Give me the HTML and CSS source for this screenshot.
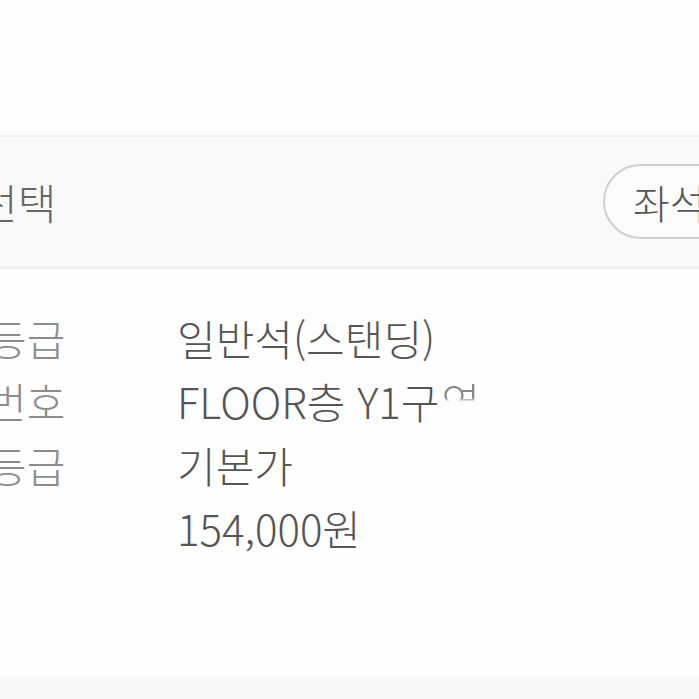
FILE: index.html
```html
<!DOCTYPE html>
<html lang="ko">
<head>
<meta charset="utf-8">
<title>좌석 선택</title>
<link rel="stylesheet" href="styles.css">
</head>
<body>
<div class="page">
  <section class="seat-head">
    <h2 class="seat-title">좌석 선택</h2>
    <button class="seat-btn" type="button">좌석 배치도</button>
  </section>
  <dl class="seat-info">
    <div class="info-row">
      <dt class="info-label">좌석 등급</dt>
      <dd class="info-value">일반석(스탠딩)</dd>
    </div>
    <div class="info-row">
      <dt class="info-label">좌석 번호</dt>
      <dd class="info-value">FLOOR층 Y1구<span class="faded">역</span></dd>
    </div>
    <div class="info-row">
      <dt class="info-label">가격 등급</dt>
      <dd class="info-value">기본가</dd>
    </div>
    <div class="info-row">
      <dt class="info-label">가격</dt>
      <dd class="info-value">154,000원</dd>
    </div>
  </dl>
  <div class="foot-band"></div>
</div>
</body>
</html>
```

FILE: styles.css
```css
* { box-sizing: border-box; }
html, body {
  margin: 0;
  padding: 0;
  background: #fefefe;
  overflow: hidden;
  width: 699px;
  height: 699px;
}
.page {
  margin-left: -110px;
  width: 1000px;
  padding-top: 135px;
  font-family: "Noto Sans CJK KR", "Noto Sans", sans-serif;
  font-weight: 300;
}
.seat-head {
  display: grid;
  grid-template-columns: 713px auto;
  align-items: center;
  height: 134px;
  background: #f9f9f9;
  border-top: 2px solid #eeeeee;
  border-bottom: 3px solid #efefef;
}
.seat-title {
  margin: 0;
  font-size: 42px;
  font-weight: 300;
  color: #666666;
  line-height: 1;
}
.seat-btn {
  justify-self: start;
  height: 75px;
  padding: 0 28px;
  border: 2px solid #cfcfcf;
  border-radius: 38px;
  background: #fbfbfb;
  font-family: inherit;
  font-weight: 300;
  font-size: 40px;
  color: #555555;
  line-height: 1;
}
.seat-info {
  margin: 0;
  padding: 37px 0 0 9px;
}
.info-row {
  display: grid;
  grid-template-columns: 278px auto;
  height: 63.5px;
  align-items: center;
}
.info-label {
  margin: 0;
  font-size: 42px;
  color: #8c8c8c;
  line-height: 1;
}
.info-value {
  margin: 0;
  font-size: 42px;
  color: #555555;
  line-height: 1;
}
.faded {
  display: inline-block;
  margin-left: 2px;
  -webkit-mask-image: linear-gradient(to bottom, #000 42%, transparent 52%);
  mask-image: linear-gradient(to bottom, #000 42%, transparent 52%);
  opacity: 0.7;
}
.foot-band {
  margin-top: 117px;
  height: 40px;
  background: #f8f8f8;
}
```
